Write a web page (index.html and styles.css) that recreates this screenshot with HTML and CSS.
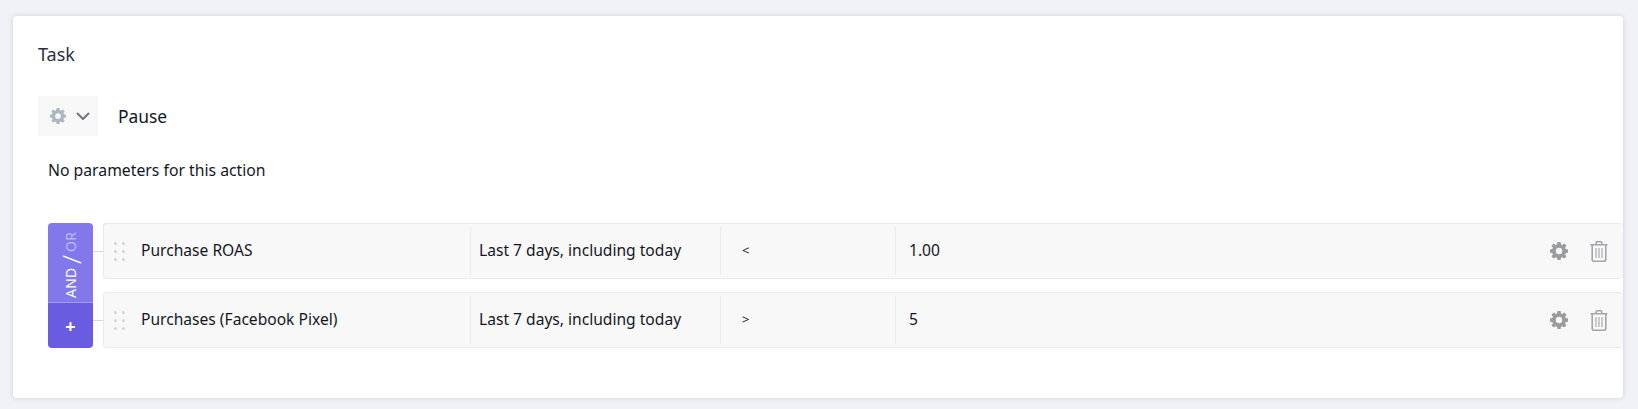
FILE: index.html
```html
<!DOCTYPE html>
<html lang="en">
<head>
  <meta charset="UTF-8">
  <title>Task</title>
  <link rel="stylesheet" href="styles.css">
</head>
<body>

  <svg class="defs">
    <defs>
      <symbol id="gear" viewBox="0 0 18 18">
        <path fill-rule="evenodd" d="M7.4 0h3.2l.4 2.4 1.3.6 2-1.4 2.2 2.2-1.4 2 .6 1.3 2.3.4v3.2l-2.3.4-.6 1.3 1.4 2-2.2 2.2-2-1.4-1.3.6-.4 2.2H7.4L7 15.8l-1.3-.6-2 1.4-2.2-2.2 1.4-2-.6-1.3L0 10.700V7.500l2.300-.4.6-1.300-1.400-2 2.200-2.200 2 1.400L7 2.400zM9 5.800a3.200 3.200 0 1 0 0 6.400 3.200 3.200 0 0 0 0-6.400z"/>
      </symbol>
      <symbol id="trash" viewBox="0 0 18 21">
        <path fill="none" stroke="currentColor" stroke-width="1.600" d="M.5 3.700h17M6.200 3.500V1.800q0-1 1-1h3.600q1 0 1 1v1.700M2.200 4v14.600q0 1.800 1.800 1.800h10q1.800 0 1.800-1.800V4"/>
        <path fill="none" stroke="currentColor" stroke-width="1.100" d="M6 7v10M9 7v10M12 7v10"/>
      </symbol>
    </defs>
  </svg>

  <div class="card">
    <div class="card-title">Task</div>

    <div class="action">
      <button class="action-btn">
        <svg class="action-gear"><use href="#gear"/></svg>
        <svg class="action-chevron" viewBox="0 0 14 8"><path d="M1 1l6 6 6-6" fill="none" stroke="currentColor" stroke-width="2"/></svg>
      </button>
      <span class="action-name">Pause</span>
    </div>

    <p class="no-params">No parameters for this action</p>

    <div class="conditions">
      <div class="logic">
        <div class="logic-toggle"><span class="logic-and">AND</span><span class="logic-slash">/</span><span class="logic-or">OR</span></div>
        <div class="logic-add">+</div>
      </div>

      <div class="rows">
        <div class="row">
          <span class="drag"><i></i><i></i><i></i><i></i><i></i><i></i></span>
          <div class="cell cell-metric">Purchase ROAS</div>
          <div class="cell cell-range">Last 7 days, including today</div>
          <div class="cell cell-op">&lt;</div>
          <div class="cell cell-value">1.00</div>
          <svg class="icon-gear"><use href="#gear"/></svg>
          <svg class="icon-trash"><use href="#trash"/></svg>
        </div>
        <div class="row">
          <span class="drag"><i></i><i></i><i></i><i></i><i></i><i></i></span>
          <div class="cell cell-metric">Purchases (Facebook Pixel)</div>
          <div class="cell cell-range">Last 7 days, including today</div>
          <div class="cell cell-op">&gt;</div>
          <div class="cell cell-value">5</div>
          <svg class="icon-gear"><use href="#gear"/></svg>
          <svg class="icon-trash"><use href="#trash"/></svg>
        </div>
      </div>
    </div>
  </div>

</body>
</html>
```

FILE: styles.css
```css
body {
  font-family: "Noto Sans", Arial, sans-serif;
  background-color: #f0f2f6;
  color: #1a1d24;
  margin: 0;
  padding: 16px 15px 11px 13px;
  font-size: 15.6px;
}

.defs {
  display: none;
}

.card {
  background-color: white;
  border-radius: 4px;
  box-shadow: 0 0 5px rgba(40, 50, 70, 0.18);
  height: 382px;
  box-sizing: border-box;
  padding: 27px 0 0 25px;
}

.card-title {
  font-size: 18px;
  line-height: 22px;
  color: #2b2f3a;
}

.action {
  display: flex;
  align-items: center;
  margin-top: 31px;
}

.action-btn {
  display: flex;
  align-items: center;
  gap: 10px;
  width: 60px;
  height: 40px;
  padding: 0 0 0 12px;
  border: none;
  background-color: #f8f8f9;
}

.action-gear {
  width: 16px;
  height: 16px;
  fill: #aeb6c0;
}

.action-chevron {
  width: 14px;
  height: 8px;
  color: #6f747c;
}

.action-name {
  margin-left: 20px;
  font-size: 17.4px;
  color: #14171f;
}

.no-params {
  margin: 22px 0 0 10px;
  line-height: 24px;
  font-size: 15.75px;
  color: #14171f;
}

.conditions {
  display: flex;
  margin: 41px 0 0 10px;
}

.logic {
  width: 45px;
  height: 125px;
  border-radius: 4px;
  overflow: hidden;
  color: white;
  flex-shrink: 0;
}

.logic-toggle {
  width: 45px;
  height: 79px;
  padding: 1px 0 6px;
  box-sizing: border-box;
  background-color: #8377ec;
  display: flex;
  align-items: center;
  justify-content: center;
  gap: 3px;
  writing-mode: vertical-rl;
  transform: rotate(180deg);
  font-size: 14px;
  line-height: 1;
  letter-spacing: 0.2px;
}

.logic-or {
  color: #c0baf6;
}

.logic-slash {
  font-size: 26px;
  font-weight: 300;
  line-height: 1;
  margin: 0 -2px;
}

.logic-add {
  height: 46px;
  box-sizing: border-box;
  background-color: #6a5ce0;
  border-top: 1px solid #a59cf1;
  text-align: center;
  line-height: 47px;
  font-size: 18px;
  font-weight: 700;
}

.rows {
  flex: 1;
  margin-left: 10px;
  display: flex;
  flex-direction: column;
  gap: 13px;
}

.row {
  position: relative;
  display: flex;
  align-items: center;
  height: 56px;
  box-sizing: border-box;
  background-color: #f8f8f9;
  border: 1px solid #e9eaec;
  border-right: none;
  border-radius: 3px;
}

/* little connector to the and/or block */
.row::before {
  content: "";
  position: absolute;
  left: -11px;
  top: 27px;
  width: 10px;
  height: 1px;
  background-color: #d5d8e6;
}

.drag {
  display: grid;
  grid-template-columns: 3px 3px;
  gap: 5px 5px;
  margin-left: 10px;
  width: 11px;
  flex-shrink: 0;
}

.drag i {
  width: 3px;
  height: 3px;
  border-radius: 50%;
  background-color: #d4d5d8;
}

.cell {
  height: 48px;
  line-height: 47px;
  box-sizing: border-box;
  white-space: nowrap;
  color: #14171f;
}

.cell-metric {
  width: 329px;
  margin-left: 16px;
}

.cell-range {
  width: 250px;
  padding-left: 8px;
  border-left: 1px solid #e9eaec;
}

.cell-op {
  width: 175px;
  padding-left: 21px;
  font-size: 13px;
  border-left: 1px solid #e9eaec;
}

.cell-value {
  flex: 1;
  padding-left: 13px;
  border-left: 1px solid #e9eaec;
}

.icon-gear {
  width: 18px;
  height: 18px;
  fill: #9a9c9f;
  margin-right: 22px;
}

.icon-trash {
  width: 18px;
  height: 21px;
  color: #a3a5a8;
  margin-right: 15px;
}
```
